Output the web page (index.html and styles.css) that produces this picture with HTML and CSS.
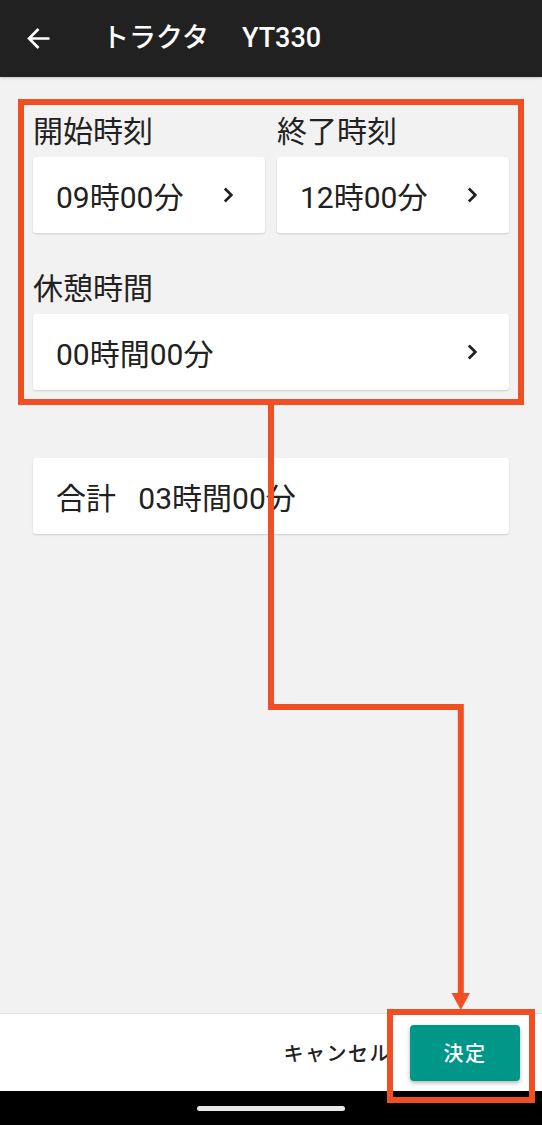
FILE: index.html
```html
<!DOCTYPE html>
<html lang="ja">
<head>
    <meta charset="UTF-8">
    <meta name="viewport" content="width=device-width, initial-scale=1.0">
    <title>トラクタ YT330</title>
    <link rel="stylesheet" href="styles.css">
</head>
<body>
    <div class="screen">
        <header class="app-bar">
            <svg class="back-icon" width="24" height="24" viewBox="0 0 24 24">
                <path d="M22.5 11.5H2.5M11.5 2L2 11.5L11.5 21" fill="none" stroke="#fff" stroke-width="2.6"/>
            </svg>
            <h1 class="app-title">トラクタ　<span class="model">YT330</span></h1>
        </header>

        <main class="content">
            <div class="time-row">
                <div class="field">
                    <div class="field-label">開始時刻</div>
                    <div class="picker">
                        <span>09時00分</span>
                        <svg class="chevron" width="10" height="16" viewBox="0 0 10 16"><path d="M1.8 1.5L8.3 8L1.8 14.5" fill="none" stroke="#212121" stroke-width="2.6"/></svg>
                    </div>
                </div>
                <div class="field">
                    <div class="field-label">終了時刻</div>
                    <div class="picker">
                        <span>12時00分</span>
                        <svg class="chevron" width="10" height="16" viewBox="0 0 10 16"><path d="M1.8 1.5L8.3 8L1.8 14.5" fill="none" stroke="#212121" stroke-width="2.6"/></svg>
                    </div>
                </div>
            </div>
            <div class="field field-break">
                <div class="field-label">休憩時間</div>
                <div class="picker">
                    <span>00時間00分</span>
                    <svg class="chevron" width="10" height="16" viewBox="0 0 10 16"><path d="M1.8 1.5L8.3 8L1.8 14.5" fill="none" stroke="#212121" stroke-width="2.6"/></svg>
                </div>
            </div>
            <div class="total-card">合計   03時間00分</div>
        </main>

        <footer class="action-bar">
            <span class="cancel-btn">キャンセル</span>
            <button class="ok-btn" type="button">決定</button>
        </footer>
        <div class="nav-bar"><span class="home-pill"></span></div>

        <!-- annotation overlay -->
        <div class="mark mark-form"></div>
        <div class="mark mark-button"></div>
        <svg class="connector" width="542" height="1125" viewBox="0 0 542 1125">
            <polyline points="271,405 271,707 460.8,707 460.8,995" fill="none" stroke="#f04e23" stroke-width="6"/>
            <polygon points="451.5,993 470,993 460.8,1010" fill="#f04e23"/>
        </svg>
    </div>
</body>
</html>
```

FILE: styles.css
```css
body {
    margin: 0;
    background-color: #f2f2f2;
    font-family: Roboto, "Noto Sans CJK JP", sans-serif;
    color: #212121;
}
.screen {
    position: relative;
    width: 542px;
    height: 1125px;
    display: flex;
    flex-direction: column;
    overflow: hidden;
}
.app-bar {
    height: 77px;
    flex-shrink: 0;
    display: flex;
    align-items: center;
    padding-left: 27px;
    background-color: #212121;
    box-shadow: 0 1px 3px rgba(0,0,0,0.2);
    position: relative;
    z-index: 1;
}
.back-icon {
    display: block;
}
.app-title {
    margin: 0 0 0 51px;
    font-size: 27px;
    font-weight: 500;
    color: #fff;
    line-height: 1;
}
.model {
    margin-left: 6px;
}
.content {
    flex: 1;
    padding: 35px 33px 0;
}
.time-row {
    display: flex;
    gap: 12px;
}
.time-row .field {
    flex: 1;
}
.field-label {
    font-size: 30px;
    line-height: 40px;
    height: 40px;
    margin-bottom: 5px;
}
.field-break {
    margin-top: 36px;
}
.picker, .total-card {
    height: 76px;
    box-sizing: border-box;
    display: flex;
    align-items: center;
    justify-content: space-between;
    padding: 0 32px 0 23px;
    background-color: #fff;
    border-radius: 3px;
    box-shadow: 0 1px 2px rgba(0,0,0,0.15);
    font-size: 30px;
}
.chevron {
    display: block;
}
.total-card {
    margin-top: 68px;
    justify-content: flex-start;
    white-space: pre;
}
.action-bar {
    height: 77px;
    flex-shrink: 0;
    display: flex;
    align-items: center;
    justify-content: flex-end;
    padding-right: 22px;
    background-color: #fff;
    border-top: 1px solid #e0e0e0;
}
.cancel-btn {
    font-size: 20px;
    font-weight: 500;
    letter-spacing: 1.5px;
    margin-right: 19px;
}
.ok-btn {
    width: 110px;
    height: 56px;
    border: none;
    border-radius: 4px;
    background-color: #009688;
    color: #fff;
    font-family: Roboto, "Noto Sans CJK JP", sans-serif;
    font-size: 20px;
    font-weight: 500;
    letter-spacing: 1.5px;
    box-shadow: 0 2px 4px rgba(0,0,0,0.3);
    cursor: pointer;
}
.nav-bar {
    height: 34px;
    flex-shrink: 0;
    background-color: #000;
    display: flex;
    align-items: center;
    justify-content: center;
}
.home-pill {
    width: 148px;
    height: 5px;
    border-radius: 3px;
    background-color: #e8e8e8;
}
.mark {
    position: absolute;
    box-sizing: border-box;
    border: 6px solid #f04e23;
}
.mark-form {
    left: 18px;
    top: 99px;
    width: 506px;
    height: 306px;
}
.mark-button {
    left: 387px;
    top: 1009px;
    width: 148px;
    height: 94px;
}
.connector {
    position: absolute;
    left: 0;
    top: 0;
    pointer-events: none;
}
```
